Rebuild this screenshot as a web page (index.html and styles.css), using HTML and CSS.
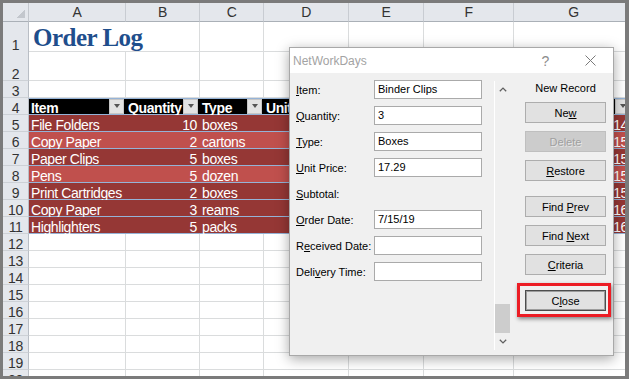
FILE: index.html
```html
<!DOCTYPE html>
<html lang="en">
<head>
    <meta charset="UTF-8">
    <meta name="viewport" content="width=device-width, initial-scale=1.0">
    <title>Order Log</title>
    <link rel="stylesheet" href="styles.css">
</head>
<body>
    <div class="window">
        <div class="sheet">
            <div class="row hdr">
                <div class="corner"></div>
                <div class="colh">A</div><div class="colh">B</div><div class="colh">C</div><div class="colh">D</div>
                <div class="colh">E</div><div class="colh">F</div><div class="colh">G</div>
            </div>
            <div class="row r1">
                <div class="rowh">1</div>
                <div class="c title">Order Log</div>
                <div class="c"></div><div class="c"></div><div class="c"></div><div class="c"></div><div class="c"></div><div class="c"></div>
            </div>
            <div class="row r2">
                <div class="rowh">2</div>
                <div class="c"></div><div class="c"></div><div class="c"></div><div class="c"></div><div class="c"></div><div class="c"></div><div class="c"></div>
            </div>
            <div class="row">
                <div class="rowh">3</div>
                <div class="c"></div><div class="c"></div><div class="c"></div><div class="c"></div><div class="c"></div><div class="c"></div><div class="c"></div>
            </div>
            <div class="row th">
                <div class="rowh">4</div>
                <div class="c"><span>Item</span><span class="dd"></span></div>
                <div class="c"><span>Quantity</span><span class="dd"></span></div>
                <div class="c"><span>Type</span><span class="dd"></span></div>
                <div class="c"><span>Unit Price</span><span class="dd"></span></div>
                <div class="c"><span>Subtotal</span><span class="dd"></span></div>
                <div class="c"><span>Order Date</span><span class="dd"></span></div>
                <div class="c"><span>Received</span><span class="dd"></span></div>
            </div>
            <div class="row dk">
                <div class="rowh">5</div>
                <div class="c">File Folders</div><div class="c num">10</div><div class="c">boxes</div>
                <div class="c num">4.99</div><div class="c num">49.90</div><div class="c num">7/10/19</div><div class="c num">14</div>
            </div>
            <div class="row lt">
                <div class="rowh">6</div>
                <div class="c">Copy Paper</div><div class="c num">2</div><div class="c">cartons</div>
                <div class="c num">34.99</div><div class="c num">69.98</div><div class="c num">7/11/19</div><div class="c num">15</div>
            </div>
            <div class="row dk">
                <div class="rowh">7</div>
                <div class="c">Paper Clips</div><div class="c num">5</div><div class="c">boxes</div>
                <div class="c num">1.29</div><div class="c num">6.45</div><div class="c num">7/11/19</div><div class="c num">15</div>
            </div>
            <div class="row lt">
                <div class="rowh">8</div>
                <div class="c">Pens</div><div class="c num">5</div><div class="c">dozen</div>
                <div class="c num">8.49</div><div class="c num">42.45</div><div class="c num">7/12/19</div><div class="c num">15</div>
            </div>
            <div class="row dk">
                <div class="rowh">9</div>
                <div class="c">Print Cartridges</div><div class="c num">2</div><div class="c">boxes</div>
                <div class="c num">24.99</div><div class="c num">49.98</div><div class="c num">7/12/19</div><div class="c num">15</div>
            </div>
            <div class="row dk">
                <div class="rowh">10</div>
                <div class="c">Copy Paper</div><div class="c num">3</div><div class="c">reams</div>
                <div class="c num">6.99</div><div class="c num">20.97</div><div class="c num">7/13/19</div><div class="c num">16</div>
            </div>
            <div class="row dk">
                <div class="rowh">11</div>
                <div class="c">Highlighters</div><div class="c num">5</div><div class="c">packs</div>
                <div class="c num">3.49</div><div class="c num">17.45</div><div class="c num">7/13/19</div><div class="c num">16</div>
            </div>
            <div class="row"><div class="rowh">12</div><div class="c"></div><div class="c"></div><div class="c"></div><div class="c"></div><div class="c"></div><div class="c"></div><div class="c"></div></div>
            <div class="row"><div class="rowh">13</div><div class="c"></div><div class="c"></div><div class="c"></div><div class="c"></div><div class="c"></div><div class="c"></div><div class="c"></div></div>
            <div class="row"><div class="rowh">14</div><div class="c"></div><div class="c"></div><div class="c"></div><div class="c"></div><div class="c"></div><div class="c"></div><div class="c"></div></div>
            <div class="row"><div class="rowh">15</div><div class="c"></div><div class="c"></div><div class="c"></div><div class="c"></div><div class="c"></div><div class="c"></div><div class="c"></div></div>
            <div class="row"><div class="rowh">16</div><div class="c"></div><div class="c"></div><div class="c"></div><div class="c"></div><div class="c"></div><div class="c"></div><div class="c"></div></div>
            <div class="row"><div class="rowh">17</div><div class="c"></div><div class="c"></div><div class="c"></div><div class="c"></div><div class="c"></div><div class="c"></div><div class="c"></div></div>
            <div class="row"><div class="rowh">18</div><div class="c"></div><div class="c"></div><div class="c"></div><div class="c"></div><div class="c"></div><div class="c"></div><div class="c"></div></div>
            <div class="row"><div class="rowh">19</div><div class="c"></div><div class="c"></div><div class="c"></div><div class="c"></div><div class="c"></div><div class="c"></div><div class="c"></div></div>
            <div class="row"><div class="rowh">20</div><div class="c"></div><div class="c"></div><div class="c"></div><div class="c"></div><div class="c"></div><div class="c"></div><div class="c"></div></div>
        </div>

        <div class="dialog">
            <div class="titlebar">
                <span class="dtitle">NetWorkDays</span>
                <span class="help">?</span>
                <span class="xbtn">
                    <svg width="11" height="11" viewBox="0 0 11 11"><path d="M0.5 0.5L10.5 10.5M10.5 0.5L0.5 10.5" stroke="#7a7a7a" stroke-width="1" fill="none"/></svg>
                </span>
            </div>
            <div class="dbody">
                <div class="fields">
                    <div class="field"><label><u>I</u>tem:</label><div class="box">Binder Clips</div></div>
                    <div class="field"><label><u>Q</u>uantity:</label><div class="box">3</div></div>
                    <div class="field"><label><u>T</u>ype:</label><div class="box">Boxes</div></div>
                    <div class="field"><label><u>U</u>nit Price:</label><div class="box">17.29</div></div>
                    <div class="field"><label><u>S</u>ubtotal:</label></div>
                    <div class="field"><label><u>O</u>rder Date:</label><div class="box">7/15/19</div></div>
                    <div class="field"><label>R<u>e</u>ceived Date:</label><div class="box"></div></div>
                    <div class="field"><label>Deli<u>v</u>ery Time:</label><div class="box"></div></div>
                </div>
                <div class="scroll">
                    <div class="arrow">
                        <svg width="8" height="5" viewBox="0 0 8 5"><polyline points="0.8,4.3 4,1.1 7.2,4.3" stroke="#606060" stroke-width="1.3" fill="none"/></svg>
                    </div>
                    <div class="track"></div>
                    <div class="thumb"></div>
                    <div class="arrow">
                        <svg width="8" height="5" viewBox="0 0 8 5"><polyline points="0.8,0.7 4,3.9 7.2,0.7" stroke="#606060" stroke-width="1.3" fill="none"/></svg>
                    </div>
                </div>
                <div class="buttons">
                    <div class="caption">New Record</div>
                    <button class="btn">Ne<u>w</u></button>
                    <button class="btn off">Delete</button>
                    <button class="btn"><u>R</u>estore</button>
                    <button class="btn sep">Find <u>P</u>rev</button>
                    <button class="btn">Find <u>N</u>ext</button>
                    <button class="btn"><u>C</u>riteria</button>
                    <button class="btn sep focus">C<u>l</u>ose</button>
                </div>
            </div>
            <div class="mark"></div>
        </div>
    </div>
</body>
</html>
```

FILE: styles.css
```css
* {
    box-sizing: border-box;
}
body {
    margin: 0;
    font-family: "Liberation Sans", Arial, sans-serif;
}
.window {
    position: relative;
    width: 629px;
    height: 379px;
    padding: 3px 4px 3px 3px;
    background: #7b7b7b;
    overflow: hidden;
}
.sheet {
    height: 373px;
    background: #fff;
    overflow: hidden;
    font-size: 14px;
    letter-spacing: -0.4px;
    color: #000;
}
.row {
    display: grid;
    grid-template-columns: 26px 97px 74px 64px 85px 75px 90px 120px;
    height: 17px;
}
.hdr {
    height: 19px;
    line-height: 18px;
}
.r1 {
    height: 29px;
}
.r2 {
    height: 30px;
}
.corner {
    background: linear-gradient(135deg, transparent 50%, #c3c7cd 50%) no-repeat right 3px bottom 3px / 9px 9px, #e4e7ec;
    border-right: 1px solid #c3c7cd;
    border-bottom: 1px solid #aab0b7;
}
.colh {
    background: #e4e7ec;
    color: #333;
    text-align: center;
    border-right: 1px solid #c8ccd2;
    border-bottom: 1px solid #aab0b7;
}
.rowh {
    display: flex;
    align-items: flex-end;
    justify-content: center;
    line-height: 11px;
    background: #e4e7ec;
    color: #333;
    border-right: 1px solid #b9bec5;
    border-bottom: 1px solid #cdd1d6;
}
.c {
    padding: 5px 2px 0;
    line-height: 11px;
    white-space: nowrap;
    border-right: 1px solid #dadcdd;
    border-bottom: 1px solid #dadcdd;
}
.num {
    text-align: right;
    padding-right: 3px;
}
.c.num:last-child {
    padding-right: 6px;
}
.title {
    border-right: none;
    padding: 3px 0 0 4px;
    font-family: "Liberation Serif", "Times New Roman", serif;
    font-weight: bold;
    font-size: 25px;
    letter-spacing: -0.5px;
    line-height: 26px;
    color: #1f4e8c;
}

/* table rows */
.th .c {
    display: flex;
    align-items: flex-end;
    justify-content: space-between;
    padding: 0 2px;
    line-height: 12px;
    background: #000;
    color: #fff;
    font-weight: bold;
    border-right: none;
    border-bottom: 1px solid #95b3d7;
    box-shadow: inset 0 1px 0 #95b3d7;
}
.th .c:last-child {
    padding-right: 4px;
}
.dd {
    flex: none;
    align-self: center;
    display: flex;
    align-items: center;
    justify-content: center;
    width: 15px;
    height: 15px;
    background: #e3e3e3;
    border: 1px solid #c6c6c6;
}
.dd::after {
    content: "";
    border-left: 3.5px solid transparent;
    border-right: 3.5px solid transparent;
    border-top: 4px solid #555;
}
.dk .c,
.lt .c {
    color: #fff;
    border-right: none;
    border-bottom: 1px solid #95b3d7;
}
.dk .c {
    background: #953735;
}
.lt .c {
    background: #c0504d;
}

/* record form */
.dialog {
    position: absolute;
    left: 289px;
    top: 47px;
    width: 325px;
    height: 309px;
    background: #f0f0f0;
    border: 1px solid #a8a8a8;
    box-shadow: 0 3px 12px rgba(0, 0, 0, 0.35);
    font-size: 11px;
    color: #000;
}
.titlebar {
    display: flex;
    align-items: center;
    height: 25px;
    background: #fff;
}
.dtitle {
    padding-left: 3px;
    font-size: 12px;
    color: #a3a3a3;
}
.help,
.xbtn {
    display: flex;
    align-items: center;
    justify-content: center;
    width: 45px;
    height: 100%;
}
.help {
    margin-left: auto;
    font-size: 14px;
    color: #8c8c8c;
}
.dbody {
    display: flex;
    height: 282px;
    padding-left: 6px;
}
.fields {
    width: 186px;
    padding-top: 7px;
}
.field {
    display: flex;
    align-items: center;
    height: 19px;
    margin-bottom: 7px;
}
.field label {
    width: 78px;
}
.box {
    width: 108px;
    height: 19px;
    padding: 0 3px;
    line-height: 17px;
    background: #fff;
    border: 1px solid #aaa;
}
.scroll {
    display: flex;
    flex-direction: column;
    width: 16px;
    height: 269px;
    margin: 8px 0 0 12px;
    border-left: 1px solid #fff;
}
.arrow {
    display: flex;
    align-items: center;
    justify-content: center;
    height: 17px;
}
.track {
    flex: 1;
}
.thumb {
    height: 29px;
    background: #cdcdcd;
}
.buttons {
    display: flex;
    flex-direction: column;
    width: 81px;
    margin-left: 15px;
    padding-top: 8px;
}
.caption {
    line-height: 14px;
    text-align: center;
    margin-bottom: 7px;
}
.btn {
    height: 21px;
    margin: 0 0 8px;
    padding: 0;
    font: inherit;
    color: #000;
    background: #e1e1e1;
    border: 1px solid #adadad;
}
.btn.sep {
    margin-top: 7px;
}
.btn.off {
    background: #cccccc;
    border-color: #bfbfbf;
    color: #a0a0a0;
    text-shadow: 1px 1px 0 #e6e6e6;
}
.btn.focus {
    border-color: #4d4d4d;
    box-shadow: inset 0 0 0 1px #9c9c9c;
}
.mark {
    position: absolute;
    left: 227px;
    top: 235px;
    width: 94px;
    height: 34px;
    border: 3px solid #ec1c24;
    box-shadow: 1px 2px 4px rgba(0, 0, 0, 0.45);
}
```
